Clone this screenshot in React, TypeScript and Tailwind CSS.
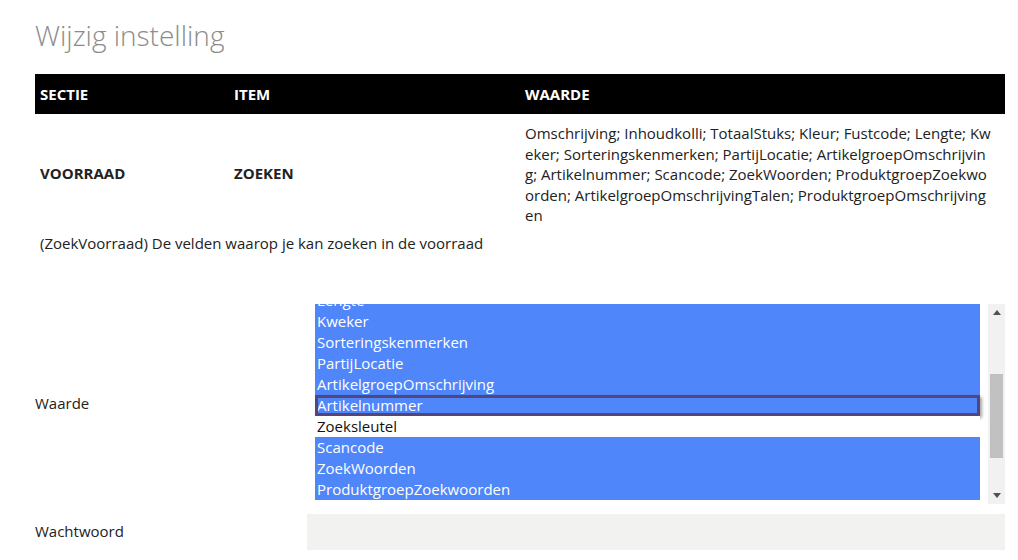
import React from 'react'

// wrapped the same way the original cell breaks (word-break: break-all)
const VALUE_LINES = [
  'Omschrijving; Inhoudkolli; TotaalStuks; Kleur; Fustcode; Lengte; Kw',
  'eker; Sorteringskenmerken; PartijLocatie; ArtikelgroepOmschrijvin',
  'g; Artikelnummer; Scancode; ZoekWoorden; ProduktgroepZoekwo',
  'orden; ArtikelgroepOmschrijvingTalen; ProduktgroepOmschrijving',
  'en',
]

// options in the list, selected ones are highlighted
const OPTIONS: { label: string; selected: boolean; focused?: boolean }[] = [
  { label: 'Lengte', selected: true },
  { label: 'Kweker', selected: true },
  { label: 'Sorteringskenmerken', selected: true },
  { label: 'PartijLocatie', selected: true },
  { label: 'ArtikelgroepOmschrijving', selected: true },
  { label: 'Artikelnummer', selected: true, focused: true },
  { label: 'Zoeksleutel', selected: false },
  { label: 'Scancode', selected: true },
  { label: 'ZoekWoorden', selected: true },
  { label: 'ProduktgroepZoekwoorden', selected: true },
]

function Scrollbar() {
  return (
    <div className="w-[17px] shrink-0 bg-[#f1f1f1] flex flex-col items-center">
      <div className="h-[17px] w-full flex items-center justify-center">
        <svg width="8" height="5" viewBox="0 0 8 5">
          <path d="M0 5 L4 0 L8 5 Z" fill="#505050" />
        </svg>
      </div>
      <div className="flex-1 w-full px-[2px]">
        <div className="mt-[53px] h-[84px] bg-[#c1c1c1]" />
      </div>
      <div className="h-[17px] w-full flex items-center justify-center">
        <svg width="8" height="5" viewBox="0 0 8 5">
          <path d="M0 0 L8 0 L4 5 Z" fill="#505050" />
        </svg>
      </div>
    </div>
  )
}

export default function App() {
  return (
    <div
      className="w-[1018px] h-[560px] bg-white overflow-hidden text-[#222] text-[15px]"
      style={{ fontFamily: '"Open Sans", "Noto Sans", sans-serif' }}
    >
      <div className="ml-[35px] w-[970px] pt-[18px]">
        <h1 className="text-[28px] font-light text-[#8c8c8c] leading-[34px]">Wijzig instelling</h1>

        <table className="mt-[22px] w-[970px] border-collapse table-fixed">
          <thead>
            <tr className="bg-black text-white h-[40px]">
              <th className="w-[20%] text-left font-bold px-[5px]">SECTIE</th>
              <th className="w-[30%] text-left font-bold px-[5px]">ITEM</th>
              <th className="w-[50%] text-left font-bold px-[5px]">WAARDE</th>
            </tr>
          </thead>
          <tbody>
            <tr>
              <td className="px-[5px] font-bold">VOORRAAD</td>
              <td className="px-[5px] font-bold">ZOEKEN</td>
              <td className="px-[5px] pt-[9px] pb-[7px] leading-[20.5px]">
                {VALUE_LINES.map((l) => (
                  <div key={l} className="whitespace-nowrap">{l}</div>
                ))}
              </td>
            </tr>
            <tr>
              <td colSpan={3} className="px-[5px] leading-[20px]">
                (ZoekVoorraad) De velden waarop je kan zoeken in de voorraad
              </td>
            </tr>
          </tbody>
        </table>

        <div className="mt-[51px] flex items-center">
          <div className="w-[272px] shrink-0">Waarde</div>
          <div className="flex-1 h-[200px] flex">
            <div className="flex-1 overflow-hidden pl-[8px] pr-[8px]">
              <div className="-mt-[14px]">
                {OPTIONS.map((o) => (
                  <div
                    key={o.label}
                    className={
                      'h-[21px] leading-[21px] px-[2px] ' +
                      (o.selected ? 'bg-[#4f86f9] text-white ' : 'bg-white text-[#111] ') +
                      (o.focused ? 'outline-[3px] outline outline-[#54457a] -outline-offset-[3px] shadow-[2px_2px_3px_rgba(0,0,0,0.35)]' : '')
                    }
                  >
                    {o.label}
                  </div>
                ))}
              </div>
            </div>
            <Scrollbar />
          </div>
        </div>

        <div className="mt-[10px] flex items-center">
          <div className="w-[272px] shrink-0">Wachtwoord</div>
          <div className="flex-1 h-[36px] bg-[#f2f3f1]" />
        </div>
      </div>
    </div>
  )
}
